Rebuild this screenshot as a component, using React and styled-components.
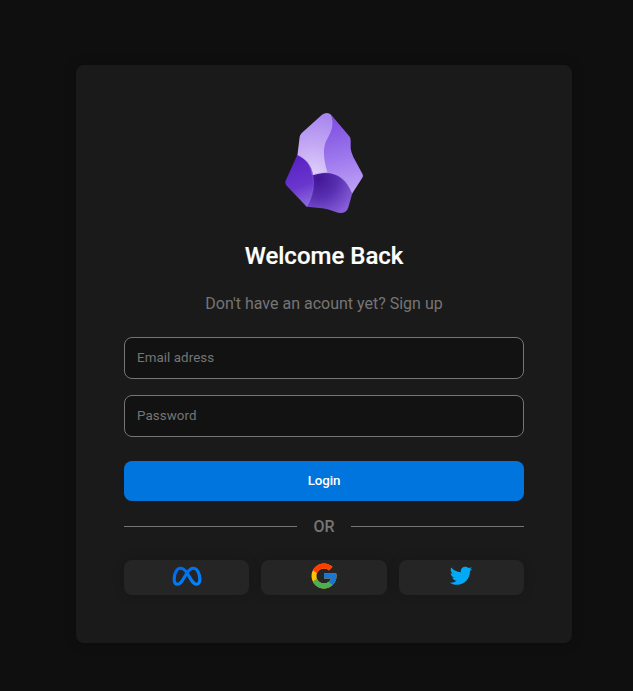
import React from "react";
import styled, { createGlobalStyle } from "styled-components";

const GlobalStyle = createGlobalStyle`
  * { box-sizing: border-box; }
  body {
    margin: 0;
    background: #0f0f0f;
    font-family: Roboto, sans-serif;
  }
`;

const Page = styled.main`
  display: flex;
  justify-content: center;
  min-height: 691px;
  padding: 65px 61px 48px 76px;
`;

const Card = styled.section`
  display: flex;
  flex-direction: column;
  align-items: center;
  width: 496px;
  height: 578px;
  padding: 48px;
  border-radius: 8px;
  background: #1a1a1a;
  box-shadow: 0 0 12px rgba(0, 0, 0, 0.25);
`;

const Logo = styled.svg`
  flex: none;
  width: 78px;
  height: 100px;
`;

const Title = styled.h1`
  margin: 29px 0 0;
  color: #fff;
  font-size: 24px;
  font-weight: 500;
  line-height: 28px;
  -webkit-text-stroke: 0.2px #fff;
`;

const Hint = styled.p`
  margin: 24px 0 0;
  color: #757575;
  font-size: 16px;
  line-height: 19px;
`;

const Form = styled.form`
  display: flex;
  flex-direction: column;
  gap: 16px;
  width: 100%;
  margin-top: 24px;
`;

const Field = styled.input`
  width: 100%;
  height: 42px;
  padding: 0 12px 2px;
  border: 1px solid #757575;
  border-radius: 8px;
  outline: none;
  background: #121212;
  color: #fff;
  font-family: Roboto, sans-serif;
  font-size: 13.333px;
  letter-spacing: 0.08px;
  &::placeholder { color: #757575; }
`;

const LoginButton = styled.button`
  height: 40px;
  margin-top: 8px;
  padding: 0 0 2px;
  border: 0;
  border-radius: 8px;
  background: #0075de;
  color: #fff;
  font-family: Roboto, sans-serif;
  font-size: 13.333px;
  font-weight: 500;
  letter-spacing: -0.1px;
`;

const Divider = styled.div`
  display: flex;
  align-items: center;
  gap: 16px;
  width: 100%;
  margin-top: 16px;
  color: #757575;
  font-size: 16px;
  font-weight: 500;
  line-height: 19px;
  &::before, &::after {
    content: "";
    flex: 1;
    height: 1px;
    background: #757575;
  }
`;

const Socials = styled.div`
  display: grid;
  grid-template-columns: repeat(3, 1fr);
  gap: 12px;
  width: 100%;
  margin-top: 24px;
`;

const SocialButton = styled.button`
  display: flex;
  justify-content: center;
  height: 35px;
  padding: 1px 0 0;
  border: 0;
  border-radius: 8px;
  background: #252525;
  box-shadow: 0 0 12px rgba(0, 0, 0, 0.15);
  svg { width: 30px; height: 30px; }
`;

function CrystalLogo() {
  return (
    <Logo viewBox="33 33 234 300" aria-label="Crystal">
      <defs>
        <radialGradient id="upperLeft" gradientUnits="userSpaceOnUse" cx="118" cy="220" r="180">
          <stop offset="0" stopColor="#dfd2fa" />
          <stop offset="0.5" stopColor="#c5a9f4" />
          <stop offset="1" stopColor="#a987ef" />
        </radialGradient>
        <linearGradient id="right" gradientUnits="userSpaceOnUse" x1="176" y1="55" x2="226" y2="265">
          <stop offset="0" stopColor="#8050e0" />
          <stop offset="0.5" stopColor="#9b75ed" />
          <stop offset="1" stopColor="#bda0f5" />
        </linearGradient>
        <linearGradient id="left" gradientUnits="userSpaceOnUse" x1="62" y1="180" x2="105" y2="308">
          <stop offset="0" stopColor="#5b25c4" />
          <stop offset="0.55" stopColor="#6936cd" />
          <stop offset="1" stopColor="#8d69df" />
        </linearGradient>
        <radialGradient id="bottom" gradientUnits="userSpaceOnUse" cx="132" cy="228" r="122">
          <stop offset="0" stopColor="#421696" />
          <stop offset="0.5" stopColor="#5930b2" />
          <stop offset="1" stopColor="#875ed8" />
        </radialGradient>
      </defs>
      <path fill="url(#upperLeft)" d="M144 38Q160 28 172 39L180 66L164 150L170 216L116 221L70 162L77 104Q79 97 84 92Z" />
      <path fill="url(#right)" d="M172 39L226 103Q230 108 230 115V139Q231 151 238 165L265 215Q269 222 264 229L235 274L198 242L161 213C150 179 145 145 156 118C166 98 183 76 172 39Z" />
      <path fill="url(#left)" d="M70 158C101 172 120 197 119 246C117 277 108 304 98 314L38 251Q32 244 35 236Z" />
      <path fill="url(#bottom)" d="M115 220C175 199 214 222 235 274L223 316Q218 334 199 333C184 332 166 322 145 319L98 314C111 291 125 257 115 220Z" />
      <path fill="none" stroke="#c4a8f6" strokeWidth="2" strokeOpacity="0.7" d="M70 158C100 173 112 193 115 219C175 199 213 222 235 274" />
      <path fill="none" stroke="#a983e9" strokeWidth="2" strokeOpacity="0.6" d="M116 221C124 257 112 291 98 314" />
    </Logo>
  );
}

function MetaIcon() {
  return (
    <svg viewBox="0 0 30 30" aria-label="Meta">
      <defs>
        <linearGradient id="meta" x1="0" y1="0" x2="0.7" y2="1">
          <stop offset="0" stopColor="#0068e8" />
          <stop offset="1" stopColor="#0084ff" />
        </linearGradient>
      </defs>
      <path
        fill="none"
        stroke="url(#meta)"
        strokeWidth="3.1"
        strokeLinejoin="round"
        d="M15 12C12.8 8.6 10.8 7.2 8.5 7.2C4.8 7.2 2.2 12.2 2.2 18C2.2 21.3 3.3 23.3 5.5 23.3C8.1 23.3 9.6 21.1 12.7 15.7L15 12C17 8.6 19 7.2 21.3 7.2C25 7.2 27.8 12.2 27.8 18.1C27.8 21.4 26.7 23.3 24.5 23.3C22 23.3 20.8 21.7 17.4 15.9L15 12Z"
      />
    </svg>
  );
}

function GoogleIcon() {
  return (
    <svg viewBox="0 0 48 48" aria-label="Google">
      <path fill="#FFC107" d="M43.611 20.083H42V20H24v8h11.303c-1.649 4.657-6.08 8-11.303 8-6.627 0-12-5.373-12-12s5.373-12 12-12c3.059 0 5.842 1.154 7.961 3.039l5.657-5.657C34.046 6.053 29.268 4 24 4 12.955 4 4 12.955 4 24s8.955 20 20 20 20-8.955 20-20c0-1.341-.138-2.65-.389-3.917z" />
      <path fill="#FF3D00" d="M6.306 14.691l6.571 4.819C14.655 15.108 18.961 12 24 12c3.059 0 5.842 1.154 7.961 3.039l5.657-5.657C34.046 6.053 29.268 4 24 4 16.318 4 9.656 8.337 6.306 14.691z" />
      <path fill="#4CAF50" d="M24 44c5.166 0 9.86-1.977 13.409-5.192l-6.19-5.238C29.211 35.091 26.715 36 24 36c-5.202 0-9.619-3.317-11.283-7.946l-6.522 5.025C9.505 39.556 16.227 44 24 44z" />
      <path fill="#1976D2" d="M43.611 20.083H42V20H24v8h11.303c-.792 2.237-2.231 4.166-4.087 5.571l6.193 5.238C36.971 39.205 44 34 44 24c0-1.341-.138-2.65-.389-3.917z" />
    </svg>
  );
}

function TwitterIcon() {
  return (
    <svg viewBox="0 0 48 48" aria-label="Twitter">
      <path fill="#03A9F4" d="M42 12.429c-1.323.586-2.746.977-4.247 1.162 1.526-.906 2.7-2.351 3.251-4.058-1.428.837-3.01 1.452-4.693 1.776C34.967 9.884 33.05 9 30.926 9c-4.08 0-7.387 3.278-7.387 7.32 0 .572.067 1.129.193 1.67-6.138-.308-11.582-3.226-15.224-7.654-.64 1.082-1 2.349-1 3.686 0 2.541 1.301 4.778 3.285 6.096-1.211-.037-2.351-.374-3.349-.914v.086c0 3.551 2.547 6.508 5.923 7.181-.617.169-1.269.263-1.941.263-.477 0-.942-.054-1.392-.135.94 2.902 3.667 5.023 6.898 5.086-2.528 1.96-5.712 3.134-9.174 3.134-.598 0-1.183-.034-1.761-.104C9.268 36.786 13.152 38 17.321 38c13.585 0 21.017-11.156 21.017-20.834 0-.317-.01-.633-.025-.945C39.763 15.197 41.013 13.905 42 12.429" />
    </svg>
  );
}

export default function App() {
  return (
    <>
      <GlobalStyle />
      <Page>
        <Card>
          <CrystalLogo />
          <Title>Welcome Back</Title>
          <Hint>Don't have an acount yet? Sign up</Hint>
          <Form>
            <Field type="email" placeholder="Email adress" />
            <Field type="password" placeholder="Password" />
            <LoginButton type="button">Login</LoginButton>
          </Form>
          <Divider>OR</Divider>
          <Socials>
            <SocialButton type="button"><MetaIcon /></SocialButton>
            <SocialButton type="button"><GoogleIcon /></SocialButton>
            <SocialButton type="button"><TwitterIcon /></SocialButton>
          </Socials>
        </Card>
      </Page>
    </>
  );
}
